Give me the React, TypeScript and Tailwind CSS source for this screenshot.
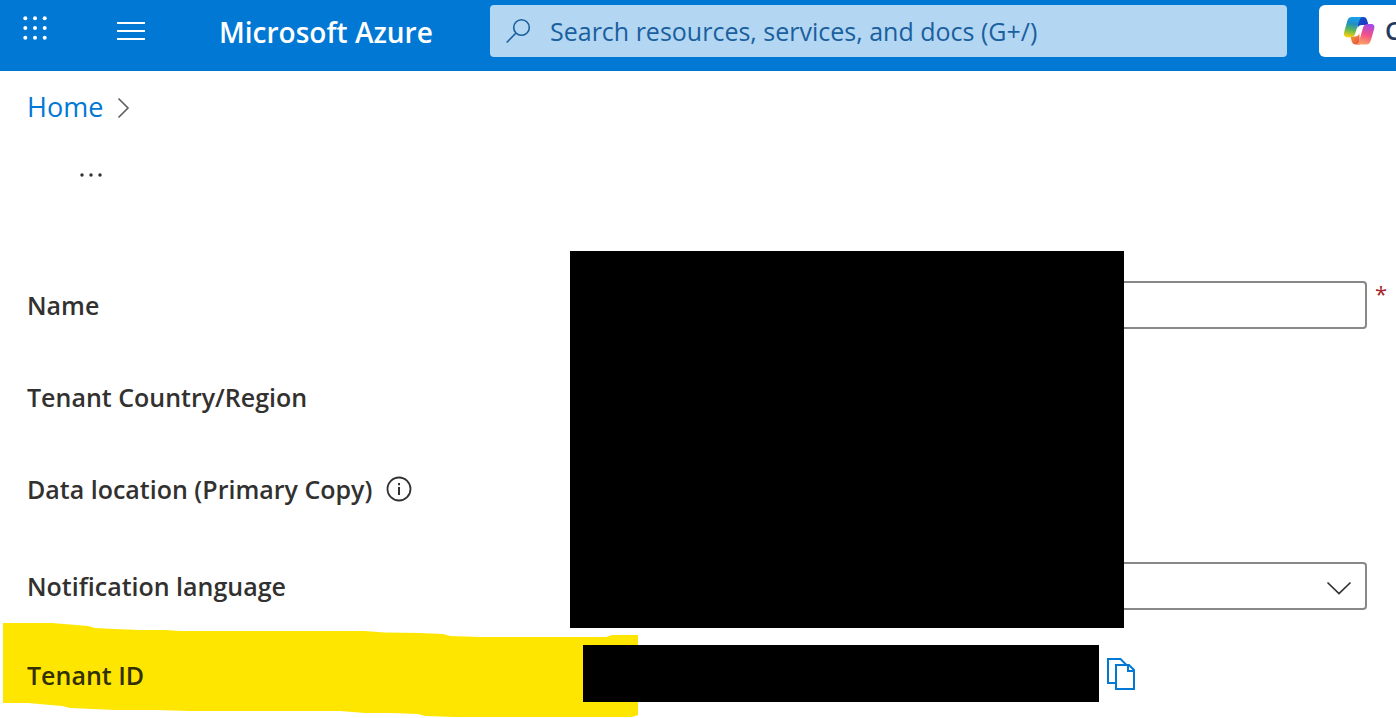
import type { ReactNode } from 'react';

function WaffleIcon() {
  return (
    <svg width="26" height="26" viewBox="0 0 26 26" fill="currentColor" aria-hidden="true">
      {[3.3, 13, 22.7].map((cy) =>
        [3.3, 13, 22.7].map((cx) => <circle key={`${cx}-${cy}`} cx={cx} cy={cy} r="2" />)
      )}
    </svg>
  );
}

function MenuIcon() {
  return (
    <svg width="28" height="18" viewBox="0 0 28 18" fill="currentColor" aria-hidden="true">
      <rect width="28" height="2" />
      <rect y="8" width="28" height="2" />
      <rect y="16" width="28" height="2" />
    </svg>
  );
}

function SearchIcon() {
  return (
    <svg
      width="26"
      height="26"
      viewBox="0 0 26 26"
      fill="none"
      stroke="#1a5f9e"
      strokeWidth="1.6"
      className="shrink-0"
      aria-hidden="true"
    >
      <circle cx="15.500" cy="9.500" r="7.800" />
      <path d="M10 15 .7 24.500" />
    </svg>
  );
}

function CopilotIcon() {
  return (
    <svg width="32" height="30" viewBox="0 0 32 30" className="shrink-0" aria-hidden="true">
      <defs>
        <linearGradient id="cool" x1="0.6" y1="0" x2="0.4" y2="1">
          <stop offset="0" stopColor="#1aa3ee" />
          <stop offset="0.35" stopColor="#1f8fc4" />
          <stop offset="0.65" stopColor="#5cb65a" />
          <stop offset="1" stopColor="#f8cf0a" />
        </linearGradient>
        <linearGradient id="warm" x1="0.7" y1="0" x2="0.4" y2="1">
          <stop offset="0" stopColor="#a34be8" />
          <stop offset="0.5" stopColor="#f0508b" />
          <stop offset="1" stopColor="#ffa262" />
        </linearGradient>
        <linearGradient id="navy" x1="0" y1="0" x2="1" y2="1">
          <stop offset="0" stopColor="#1152d0" />
          <stop offset="1" stopColor="#2432b4" />
        </linearGradient>
        <linearGradient id="ember" x1="0" y1="0" x2="1" y2="1">
          <stop offset="0" stopColor="#f6a328" />
          <stop offset="1" stopColor="#e5484b" />
        </linearGradient>
      </defs>
      <path d="M15 1h5.200c2.300 0 3.300 1.200 4 3.400L25.500 9H19c-2.500 0-3.500 1-4.500 3z" fill="url(#navy)" />
      <path d="M17 28.500h-4.500c-2.200 0-3.200-1.200-3.900-3.400L7.500 20.500H12c2.500 0 3.500-1 4.300-3z" fill="url(#ember)" />
      <path
        d="M9 1h11c-2 0-3 1.400-3.700 3.800L12.200 17.500c-.9 2.600-2.200 3.700-5 3.700H4.500c-3.200 0-4.200-2.400-3.200-5.700L4.200 5.200C5 2.400 6.200 1 9 1z"
        fill="url(#cool)"
      />
      <path
        d="M23 28.500H12.500c2 0 3-1.400 3.700-3.800L19.900 12c.9-2.800 2.200-4 5-4H28c3.200 0 4 2.200 3 5.500l-3.100 10.800c-.9 2.800-2.100 4.200-4.900 4.200z"
        fill="url(#warm)"
      />
    </svg>
  );
}

function InfoIcon() {
  return (
    <svg width="26" height="26" viewBox="0 0 26 26" fill="none" stroke="#323130" aria-hidden="true">
      <circle cx="13" cy="13" r="11.500" strokeWidth="1.800" />
      <path d="M13 11v8M13 7v2.200" strokeWidth="2" />
    </svg>
  );
}

function CopyIcon() {
  return (
    <svg width="30" height="34" viewBox="0 0 30 34" fill="none" stroke="#0078d4" strokeWidth="2" aria-hidden="true">
      <path d="M10 26H2V2h12.500L20 7.500" />
      <path d="M10 8h13l5 5v19H10z" />
      <path d="M22 8v6h6" />
    </svg>
  );
}

// Marker stroke drawn behind the tenant id row
function Highlight() {
  return (
    <svg
      width="635"
      height="94"
      viewBox="0 0 635 94"
      className="absolute -top-[22px] left-[3px]"
      fill="#ffe600"
      aria-hidden="true"
    >
      <path d="M0 0H49L85 3 92 5 112 6 137 7H162L177 8H361L382 9.500 417 10 440 11 447 13 477 14H603L609 12H635V92L629 94H452L422 93 415 91 387 90H362L337 88H187L152 87H112L67 85 59 83 25 80H0Z" />
    </svg>
  );
}

const labelText = 'text-[25px] leading-8 font-semibold whitespace-nowrap';

function Row({ label, className = '', children }: { label: ReactNode; className?: string; children?: ReactNode }) {
  return (
    <div className={`flex h-12 items-center ${className}`}>
      <div className="flex w-[543px] shrink-0 items-center gap-3.5">{label}</div>
      {children}
    </div>
  );
}

export default function App() {
  return (
    <div className="min-h-screen overflow-x-hidden bg-white font-['Open_Sans','Noto_Sans',sans-serif] text-[#323130]">
      <header className="flex h-[71px] items-start bg-[#0078d4] text-white">
        <button type="button" aria-label="App launcher" className="mt-[15px] ml-[22px] shrink-0">
          <WaffleIcon />
        </button>
        <button type="button" aria-label="Show portal menu" className="mt-[22px] ml-[69px] shrink-0">
          <MenuIcon />
        </button>
        <a
          href="#"
          className="mt-3.5 ml-[74px] w-[271px] shrink-0 text-[28px] leading-9 font-semibold whitespace-nowrap"
        >
          Microsoft Azure
        </a>
        <div className="mt-[5px] flex h-[52px] flex-1 items-center gap-[18px] rounded bg-[#b3d6f2] pl-4">
          <SearchIcon />
          <input
            type="search"
            aria-label="Search"
            placeholder="Search resources, services, and docs (G+/)"
            className="min-w-0 flex-1 bg-transparent text-[25px] leading-8 text-[#1a5f9e] outline-none placeholder:text-[#1a5f9e]"
          />
        </div>
        <button
          type="button"
          className="mt-[5px] ml-8 flex h-[52px] w-[77px] shrink-0 items-center gap-[10px] overflow-hidden rounded-l-md bg-white pl-6 text-[25px] font-semibold text-[#243a5e]"
        >
          <CopilotIcon />
          Copilot
        </button>
      </header>

      <nav aria-label="Breadcrumb" className="flex items-center gap-3.5 pt-[18px] pl-[27px]">
        <a href="#" className="text-[27px] leading-9 text-[#0078d4]">
          Home
        </a>
        <svg width="14" height="24" viewBox="0 0 14 24" fill="none" stroke="#605e5c" strokeWidth="1.600" aria-hidden="true">
          <path d="M1.500 3.500 11 13l-9.500 9.500" />
        </svg>
      </nav>

      <button type="button" aria-label="More actions" className="mt-10 ml-[78px] block px-0.5 py-2">
        <svg width="22" height="4" viewBox="0 0 22 4" fill="#323130" aria-hidden="true">
          <circle cx="2" cy="2" r="1.700" />
          <circle cx="11" cy="2" r="1.700" />
          <circle cx="20" cy="2" r="1.700" />
        </svg>
      </button>

      <form className="relative mt-24">
        <div className="pr-[29px] pl-[27px]">
          <Row
            label={
              <label htmlFor="name" className={labelText}>
                Name
              </label>
            }
          >
            <div className="relative h-12 flex-1">
              <input id="name" type="text" className="h-12 w-full rounded border-2 border-[#8a8886] px-3" />
              <span className="absolute top-0 left-full ml-2 text-[22px] leading-6 text-[#a4262c]">*</span>
            </div>
          </Row>
          <Row className="mt-11" label={<span className={labelText}>Tenant Country/Region</span>} />
          <Row
            className="mt-11"
            label={
              <>
                <span className={labelText}>Data location (Primary Copy)</span>
                <button type="button" aria-label="About data location">
                  <InfoIcon />
                </button>
              </>
            }
          />
          <Row
            className="mt-[49px]"
            label={
              <label htmlFor="language" className={labelText}>
                Notification language
              </label>
            }
          >
            <div className="relative h-12 flex-1">
              <select id="language" className="h-12 w-full appearance-none rounded border-2 border-[#8a8886] bg-white">
                <option value="" />
              </select>
              <svg
                width="26"
                height="14"
                viewBox="0 0 26 14"
                fill="none"
                stroke="#323130"
                strokeWidth="1.700"
                className="pointer-events-none absolute top-[19px] right-[15px]"
                aria-hidden="true"
              >
                <path d="M1.500 1.500 13 12.500l11.500-11" />
              </svg>
            </div>
          </Row>
        </div>

        {/* Redacted values */}
        <div className="absolute -top-[30px] left-[570px] h-[377px] w-[554px] bg-black" />

        <div className="relative mt-[35px] flex h-[57px] items-center pl-[27px]">
          <Highlight />
          <span className={`relative w-[556px] shrink-0 pt-0.5 text-[#323000] ${labelText}`}>Tenant ID</span>
          <div className="relative h-full w-[516px] bg-black" />
          <button type="button" aria-label="Copy tenant ID" className="ml-[7px]">
            <CopyIcon />
          </button>
        </div>
      </form>
    </div>
  );
}
